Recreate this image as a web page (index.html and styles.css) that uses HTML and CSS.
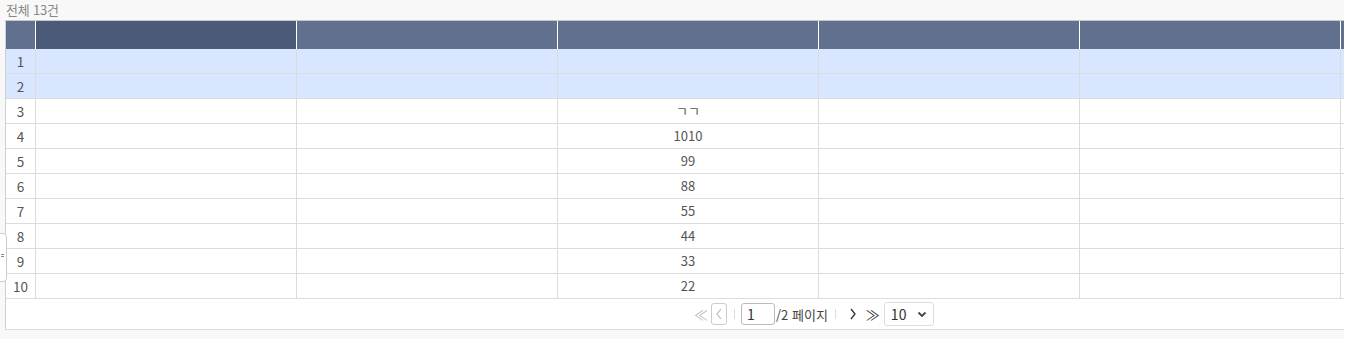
FILE: index.html
```html
<!DOCTYPE html>
<html lang="ko">
<head>
<meta charset="utf-8">
<title>Grid</title>
<link rel="stylesheet" href="styles.css">
</head>
<body>
<div class="page">
  <div class="count">전체 13건</div>
  <div class="grid">
    <div class="row head">
      <div class="cell num"></div>
      <div class="cell sel"></div>
      <div class="cell"></div>
      <div class="cell"></div>
      <div class="cell"></div>
      <div class="cell"></div>
      <div class="cell"></div>
    </div>
    <div class="row picked"><div class="cell num">1</div><div class="cell"></div><div class="cell"></div><div class="cell"></div><div class="cell"></div><div class="cell"></div><div class="cell"></div></div>
    <div class="row picked"><div class="cell num">2</div><div class="cell"></div><div class="cell"></div><div class="cell"></div><div class="cell"></div><div class="cell"></div><div class="cell"></div></div>
    <div class="row"><div class="cell num">3</div><div class="cell"></div><div class="cell"></div><div class="cell">ㄱㄱ</div><div class="cell"></div><div class="cell"></div><div class="cell"></div></div>
    <div class="row"><div class="cell num">4</div><div class="cell"></div><div class="cell"></div><div class="cell">1010</div><div class="cell"></div><div class="cell"></div><div class="cell"></div></div>
    <div class="row"><div class="cell num">5</div><div class="cell"></div><div class="cell"></div><div class="cell">99</div><div class="cell"></div><div class="cell"></div><div class="cell"></div></div>
    <div class="row"><div class="cell num">6</div><div class="cell"></div><div class="cell"></div><div class="cell">88</div><div class="cell"></div><div class="cell"></div><div class="cell"></div></div>
    <div class="row"><div class="cell num">7</div><div class="cell"></div><div class="cell"></div><div class="cell">55</div><div class="cell"></div><div class="cell"></div><div class="cell"></div></div>
    <div class="row"><div class="cell num">8</div><div class="cell"></div><div class="cell"></div><div class="cell">44</div><div class="cell"></div><div class="cell"></div><div class="cell"></div></div>
    <div class="row"><div class="cell num">9</div><div class="cell"></div><div class="cell"></div><div class="cell">33</div><div class="cell"></div><div class="cell"></div><div class="cell"></div></div>
    <div class="row"><div class="cell num">10</div><div class="cell"></div><div class="cell"></div><div class="cell">22</div><div class="cell"></div><div class="cell"></div><div class="cell"></div></div>
    <div class="pager">
      <span class="pg-first">&#x226A;</span>
      <span class="pg-prev">
        <svg width="8" height="12" viewBox="0 0 8 12"><path d="M6 1 L2 6 L6 11" fill="none" stroke="#bbb" stroke-width="1.2"/></svg>
      </span>
      <span class="pg-sep"></span>
      <span class="pg-input">1</span>
      <span class="pg-total">/2 페이지</span>
      <span class="pg-sep"></span>
      <span class="pg-next">
        <svg width="8" height="12" viewBox="0 0 8 12"><path d="M2 1 L6 6 L2 11" fill="none" stroke="#333" stroke-width="1.3"/></svg>
      </span>
      <span class="pg-last">&#x226B;</span>
      <span class="pg-size">10
        <svg width="10" height="7" viewBox="0 0 10 7"><path d="M1.5 1.5 L5 5 L8.5 1.5" fill="none" stroke="#444" stroke-width="1.8"/></svg>
      </span>
    </div>
  </div>
  <div class="handle"><span class="dots"></span></div>
</div>
</body>
</html>
```

FILE: styles.css
```css
html, body {
  margin: 0;
  padding: 0;
  background: #ffffff;
}

.page {
  position: relative;
  width: 1344px;
  height: 339px;
  background: #f8f8f8;
  font-family: "Noto Sans CJK KR", "Noto Sans", sans-serif;
  font-size: 13px;
  color: #555;
  overflow: hidden;
}

.count {
  height: 20px;
  padding-left: 6px;
  box-sizing: border-box;
  font-size: 13px;
  line-height: 20px;
  color: #888;
  letter-spacing: -0.2px;
}

.grid {
  margin-left: 5px;
  width: 1339px;
  overflow: hidden;
  background: #fff;
  border-top: 1px solid #c8c8c8;
  border-left: 1px solid #d0d0d0;
  border-bottom: 1px solid #dcdcdc;
}

.row {
  display: flex;
  height: 25px;
  box-sizing: border-box;
  border-bottom: 1px solid #dcdcdc;
  width: 1900px;
}

.cell {
  flex: none;
  width: 261px;
  box-sizing: border-box;
  border-right: 1px solid #dcdcdc;
  text-align: center;
  line-height: 24px;
  color: #555;
}

.cell.num {
  width: 30px;
  font-size: 13.5px;
}

.row.head {
  height: 28px;
  border-bottom: none;
}

.row.head .cell {
  background: #627090;
  border-right: 1px solid #ffffff;
}

.row.head .cell.sel {
  background: #4a5a78;
}

.row.picked {
  background: #d8e6ff;
}

.pager {
  height: 30px;
  display: flex;
  align-items: center;
  padding-left: 686px;
  color: #444;
}

.pg-first {
  width: 18px;
  text-align: center;
  color: #bbb;
  font-size: 14px;
}

.pg-prev {
  display: flex;
  align-items: center;
  justify-content: center;
  width: 16px;
  height: 22px;
  box-sizing: border-box;
  border: 1px solid #ccc;
  border-radius: 3px;
  margin-left: 1px;
}

.pg-sep {
  width: 1px;
  height: 10px;
  background: #ddd;
  margin: 0 6px 0 7px;
}

.pg-input {
  width: 34px;
  height: 22px;
  box-sizing: border-box;
  border: 1px solid #bbb;
  border-radius: 3px;
  padding-left: 5px;
  line-height: 20px;
  font-size: 14px;
  color: #333;
}

.pg-total {
  margin-left: 1px;
  color: #444;
  font-size: 13px;
}

.pg-next {
  display: flex;
  align-items: center;
  justify-content: center;
  width: 14px;
  margin-left: 4px;
}

.pg-last {
  width: 18px;
  text-align: center;
  color: #333;
  font-size: 14px;
  margin-left: 4px;
}

.pg-size {
  display: flex;
  align-items: center;
  justify-content: space-between;
  width: 50px;
  height: 24px;
  box-sizing: border-box;
  border: 1px solid #ddd;
  border-radius: 3px;
  padding: 0 6px 0 6px;
  margin-left: 2px;
  font-size: 14px;
  color: #333;
  background: #fff;
}

.handle {
  position: absolute;
  left: -1px;
  top: 233px;
  width: 8px;
  height: 49px;
  box-sizing: border-box;
  background: #fff;
  border: 1px solid #ccc;
  border-radius: 0 4px 4px 0;
}

.dots {
  display: block;
  width: 2px;
  height: 3px;
  margin: 20px 0 0 1px;
  border-top: 1px dotted #888;
  border-bottom: 1px dotted #888;
  box-sizing: border-box;
}
```
